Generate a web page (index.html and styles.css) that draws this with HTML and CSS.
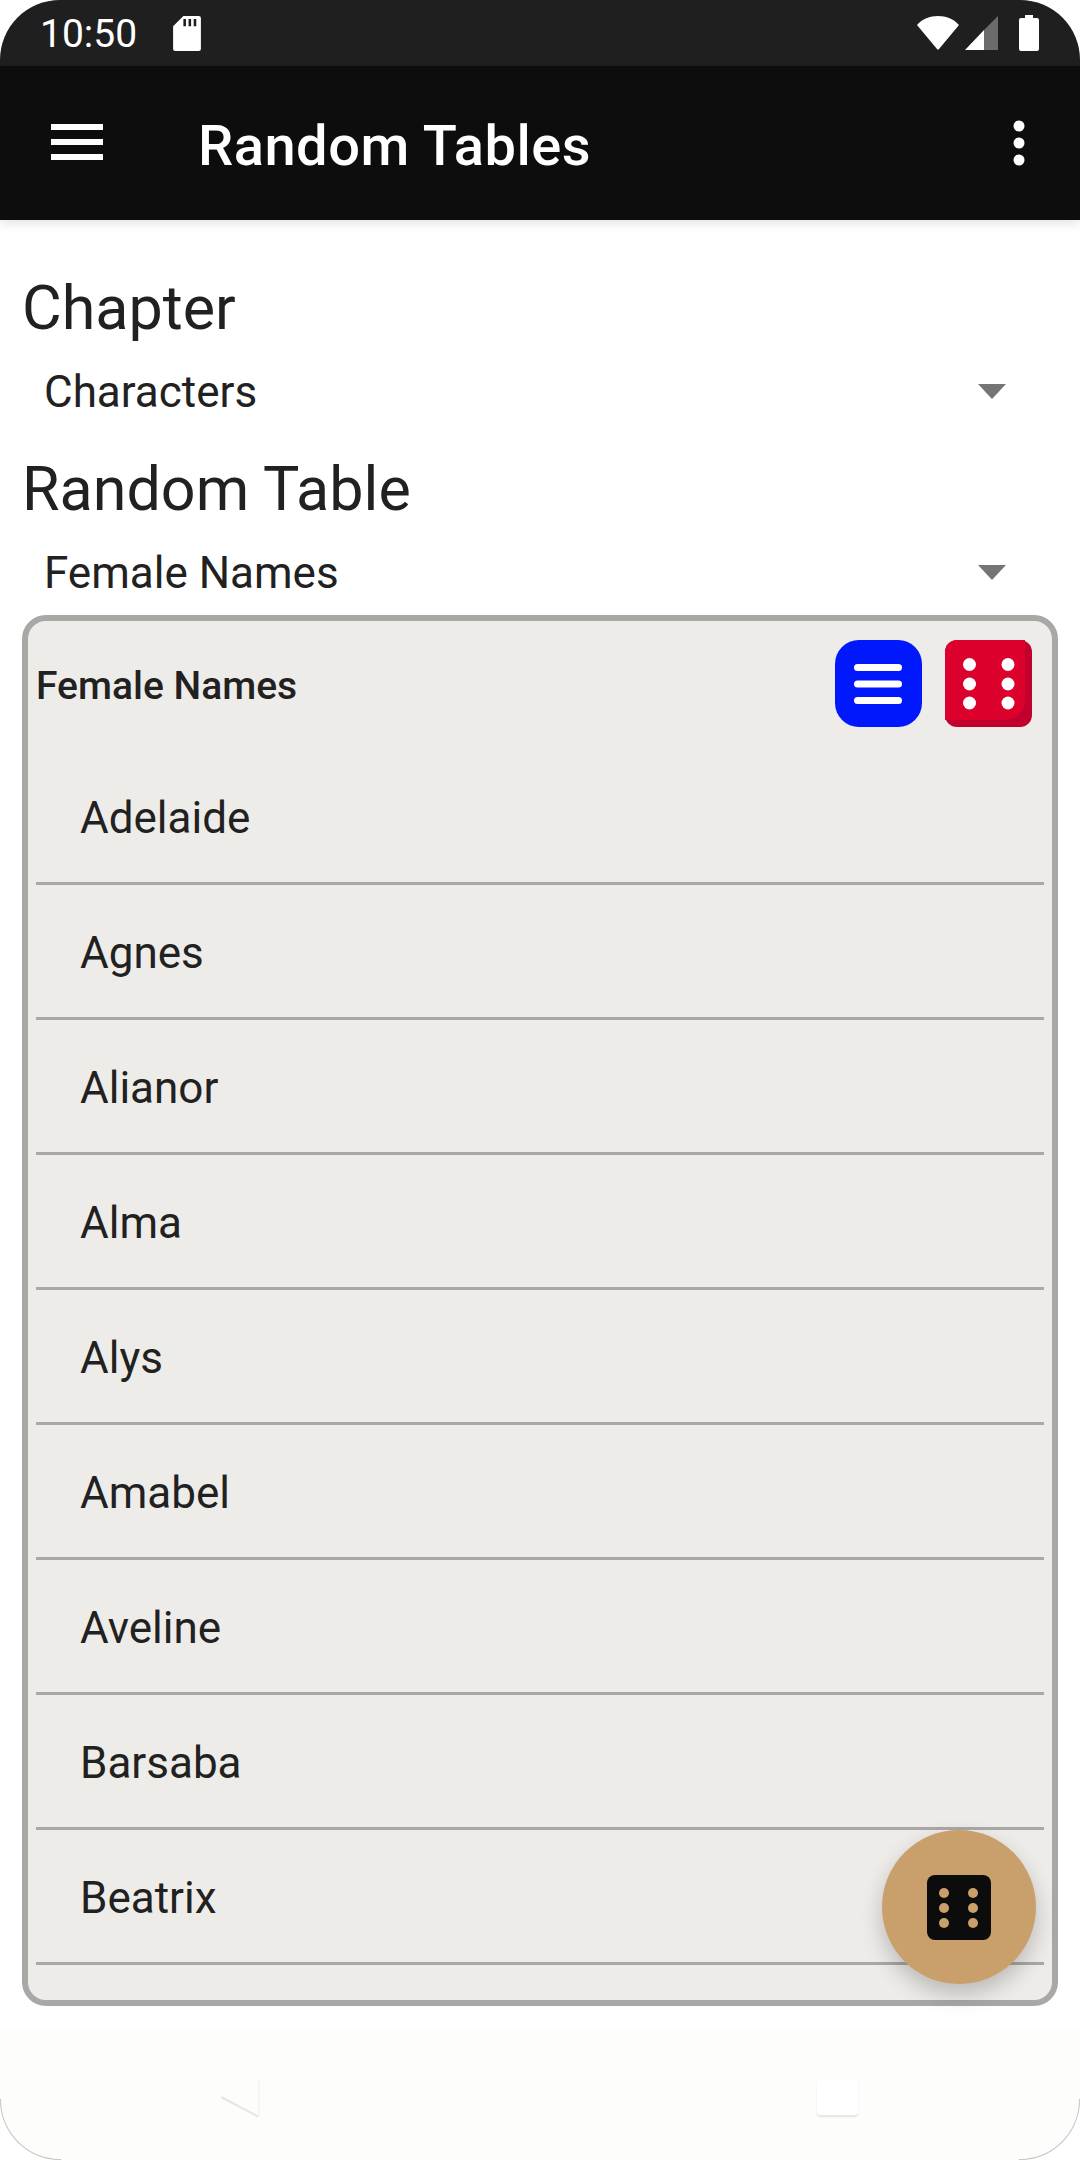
FILE: index.html
```html
<!DOCTYPE html>
<html lang="en">
<head>
<meta charset="utf-8">
<title>Random Tables</title>
<link rel="stylesheet" href="styles.css">
</head>
<body>
<div class="screen">
  <header class="status">
    <div class="status-left">
      <span class="time">10:50</span>
      <svg class="sd" viewBox="0 0 27 34"><path fill="#fff" fill-rule="evenodd" d="M10 0H25a2 2 0 0 1 2 2V32a2 2 0 0 1-2 2H2a2 2 0 0 1-2-2V10ZM10 3v7h2.500V3ZM15 3v7h2.500V3ZM20 3v7h2.500V3Z"/></svg>
    </div>
    <div class="status-right">
      <svg class="wifi" viewBox="0 0 42 34"><path fill="#fff" d="M0 9C5 3 13 0 21 0s16 3 21 9L22 33a1.300 1.300 0 0 1-2 0Z"/></svg>
      <svg class="signal" viewBox="0 0 33 34"><path fill="#6b6b6b" d="M33 0V34H19V14Z"/><path fill="#fff" d="M19 14V34H0Z"/></svg>
      <svg class="battery" viewBox="0 0 20 36"><path fill="#fff" d="M6 0H14V3H18a2 2 0 0 1 2 2V34a2 2 0 0 1-2 2H2a2 2 0 0 1-2-2V5a2 2 0 0 1 2-2H6Z"/></svg>
    </div>
  </header>
  <nav class="appbar">
    <svg class="menu" viewBox="0 0 52 36"><path fill="#fff" d="M0 0H52V6H0ZM0 15H52V21H0ZM0 30H52V36H0Z"/></svg>
    <h1 class="title">Random Tables</h1>
    <svg class="kebab" viewBox="0 0 12 46"><circle cx="6" cy="6" r="5.500" fill="#fff"/><circle cx="6" cy="23" r="5.500" fill="#fff"/><circle cx="6" cy="40" r="5.500" fill="#fff"/></svg>
  </nav>
  <main class="content">
    <h2 class="label">Chapter</h2>
    <div class="select"><span>Characters</span><i class="caret"></i></div>
    <h2 class="label">Random Table</h2>
    <div class="select"><span>Female Names</span><i class="caret"></i></div>
    <section class="card">
      <div class="card-head">
        <strong class="card-title">Female Names</strong>
        <div class="card-actions">
          <svg class="action" viewBox="0 0 87 87"><rect width="87" height="87" rx="24" fill="#0018fb"/><rect x="19" y="24" width="48" height="7" rx="3.500" fill="#fff"/><rect x="19" y="40.500" width="48" height="7" rx="3.500" fill="#fff"/><rect x="19" y="57" width="48" height="7" rx="3.500" fill="#fff"/></svg>
          <svg class="action" viewBox="0 0 87 87"><rect width="87" height="87" rx="12" fill="#c2002e"/><path fill="#dc002c" d="M12 0H80V60A20 20 0 0 1 60 80H0V12A12 12 0 0 1 12 0Z"/><g fill="#fff"><circle cx="24.500" cy="24.500" r="6.500"/><circle cx="63" cy="24.500" r="6.500"/><circle cx="24.500" cy="44" r="6.500"/><circle cx="63" cy="44" r="6.500"/><circle cx="24.500" cy="63" r="6.500"/><circle cx="63" cy="63" r="6.500"/></g></svg>
        </div>
      </div>
      <ul class="rows">
        <li class="row">Adelaide</li>
        <li class="row">Agnes</li>
        <li class="row">Alianor</li>
        <li class="row">Alma</li>
        <li class="row">Alys</li>
        <li class="row">Amabel</li>
        <li class="row">Aveline</li>
        <li class="row">Barsaba</li>
        <li class="row">Beatrix</li>
      </ul>
    </section>
  </main>
  <footer class="navbar">
    <svg class="nav-back" viewBox="0 0 40 40"><path fill="#fdfdfb" d="M39 0V40L0 20Z"/><path fill="none" stroke="#e6e5e3" stroke-width="2" d="M1 20L38 39.500"/><path fill="none" stroke="#f3f2f0" stroke-width="1.500" d="M39 39.500V2"/></svg>
    <span class="nav-home"></span>
  </footer>
  <button class="fab" type="button" aria-label="Roll">
    <svg class="fab-icon" viewBox="0 0 64 65"><rect width="64" height="65" rx="8" fill="#0d0c0c"/><g fill="#c9a06c"><circle cx="17" cy="18" r="5"/><circle cx="46" cy="18" r="5"/><circle cx="17" cy="33" r="5"/><circle cx="46" cy="33" r="5"/><circle cx="17" cy="48" r="5"/><circle cx="46" cy="48" r="5"/></g></svg>
  </button>
</div>
</body>
</html>
```
FILE: styles.css
```css
* { box-sizing: border-box; }
html, body { margin: 0; padding: 0; background: #fff; }
body { font-family: Roboto, "Liberation Sans", sans-serif; color: #212121; }
.screen { position: relative; width: 1080px; height: 2160px; overflow: hidden; display: flex; flex-direction: column; }

.status { height: 66px; flex: none; background: #201f20; border-radius: 60px 60px 0 0; display: flex; justify-content: space-between; align-items: center; padding: 0 41px 0 40px; }
.status-left { display: flex; align-items: center; gap: 36px; }
.time { color: #fff; font-size: 39px; line-height: 66px; padding-top: 1px; }
.sd { width: 28px; height: 35px; display: block; }
.status-right { display: flex; align-items: center; }
.wifi { width: 42px; height: 34px; display: block; margin-right: 6px; }
.signal { width: 33px; height: 34px; display: block; margin-right: 21px; }
.battery { width: 20px; height: 36px; display: block; }

.appbar { height: 154px; flex: none; background: #0e0d0e; display: flex; align-items: center; padding: 0 55px 0 51px; box-shadow: 0 3px 10px rgba(0,0,0,.12); position: relative; }
.menu { width: 52px; height: 36px; display: block; margin-right: 95px; margin-top: -3px; }
.title { flex: 1; margin: 0; padding-top: 5px; color: #fff; font-size: 56px; font-weight: 500; line-height: 60px; letter-spacing: .5px; }
.kebab { width: 12px; height: 46px; display: block; }

.content { flex: 1; padding: 0 22px; display: flex; flex-direction: column; min-height: 0; }
.label { margin: 0; font-size: 61px; font-weight: 400; line-height: 70px; }
.content > .label:first-child { margin-top: 53px; }
.select { display: flex; align-items: center; justify-content: space-between; height: 84px; margin: 6px 0 21px; padding: 1px 52px 0 22px; font-size: 44px; }
.caret { width: 0; height: 0; border-left: 14px solid transparent; border-right: 14px solid transparent; border-top: 15px solid #757575; }

.card { height: 1391px; flex: none; margin-top: -20px; border: 6px solid #a9a8a6; border-radius: 24px; background: #eeece8; padding: 0 8px; overflow: hidden; }
.card-head { height: 129px; display: flex; align-items: center; justify-content: space-between; padding-right: 12px; }
.card-title { font-size: 39px; font-weight: 500; color: #212121; }
.card-actions { display: flex; gap: 23px; margin-top: -4px; }
.action { width: 87px; height: 87px; display: block; }
.rows { list-style: none; margin: 0; padding: 0; }
.row { height: 135px; padding: 3px 0 0 44px; display: flex; align-items: center; font-size: 44px; border-bottom: 3px solid #a9a8a6; }

.navbar { height: 132px; flex: none; background: #fdfdfb; border-radius: 0 0 60px 60px; display: flex; align-items: center; padding: 6px 222px 0 220px; justify-content: space-between; position: relative; }
.navbar::before, .navbar::after { content: ""; position: absolute; bottom: 0; width: 60px; height: 60px; border-bottom: 1px solid #c4c4c4; }
.navbar::before { left: 0; border-left: 1px solid #c4c4c4; border-bottom-left-radius: 60px; }
.navbar::after { right: 0; border-right: 1px solid #c4c4c4; border-bottom-right-radius: 60px; }
.nav-back { width: 40px; height: 40px; display: block; }
.nav-home { width: 41px; height: 36px; border-radius: 3px; background: #fff; box-shadow: 0 2px 2px rgba(0,0,0,.1); }

.fab { position: absolute; left: 882px; top: 1830px; width: 154px; height: 154px; border: 0; padding: 0; border-radius: 50%; background: #c9a06c; display: flex; align-items: center; justify-content: center; box-shadow: 0 10px 22px rgba(0,0,0,.22); }
.fab-icon { width: 64px; height: 65px; display: block; }
```
